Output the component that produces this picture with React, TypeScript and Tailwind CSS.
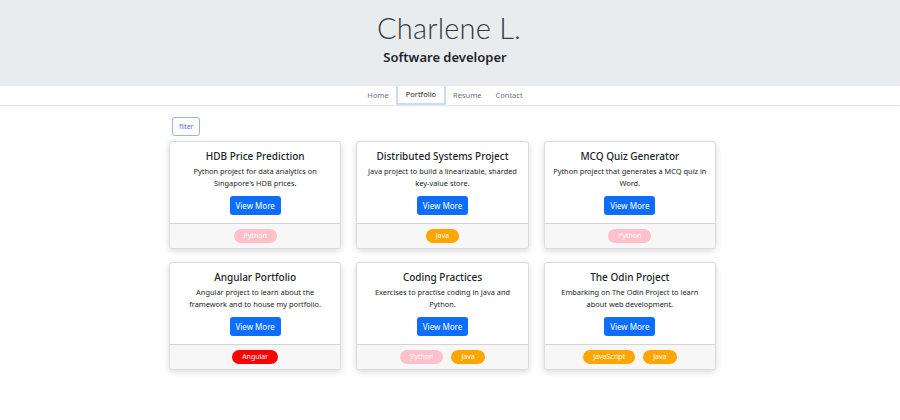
import React from 'react';

type Tag = { label: string; color: string };

interface Project {
    title: string;
    desc: string;
    tags: Tag[];
}

const PY: Tag = { label: 'Python', color: 'bg-[#ffc0cb]' };
const JAVA: Tag = { label: 'Java', color: 'bg-[#ffa500]' };

const projects: Project[] = [
    { title: 'HDB Price Prediction', desc: "Python project for data analytics on Singapore's HDB prices.", tags: [PY] },
    { title: 'Distributed Systems Project', desc: 'Java project to build a linearizable, sharded key-value store.', tags: [JAVA] },
    { title: 'MCQ Quiz Generator', desc: 'Python project that generates a MCQ quiz in Word.', tags: [PY] },
    { title: 'Angular Portfolio', desc: 'Angular project to learn about the framework and to house my portfolio.', tags: [{ label: 'Angular', color: 'bg-[#ff0000]' }] },
    { title: 'Coding Practices', desc: 'Exercises to practise coding in Java and Python.', tags: [PY, JAVA] },
    { title: 'The Odin Project', desc: 'Embarking on The Odin Project to learn about web development.', tags: [{ label: 'JavaScript', color: 'bg-[#ffa500]' }, JAVA] },
];

const ProjectCard: React.FC<{ project: Project }> = ({ project }) => (
    <div className="flex flex-col bg-white border border-[#dcdcdc] rounded-[3px] shadow-[0_2px_6px_rgba(0,0,0,0.15)]">
        <div className="flex-1 flex flex-col items-center text-center px-[7px] pt-[7px] pb-[8px]">
            <h5 className="text-[10px] leading-[14px] font-medium text-[#212529]">{project.title}</h5>
            <p className="mt-[2px] text-[7.4px] leading-[12px] text-[#212529] h-[24px]">{project.desc}</p>
            <button className="mt-[7px] w-[51px] h-[19px] rounded-[3px] bg-[#0d6efd] text-white text-[8px]">View More</button>
        </div>
        <div className="h-[25px] border-t border-[#d4d4d4] bg-[#f7f7f7] rounded-b-[3px] flex items-center justify-center gap-[8px]">
            {project.tags.map((t) => (
                <span key={t.label} className={`${t.color} text-white text-[7px] h-[14px] min-w-[33px] px-[10px] rounded-full flex items-center justify-center`}>
                    {t.label}
                </span>
            ))}
        </div>
    </div>
);

export default function App() {
    return (
        <div className="w-[900px] h-[420px] bg-white overflow-hidden font-['Noto_Sans','Open_Sans',sans-serif] text-[#212529]">
            <header className="h-[86px] bg-[#e9ecef] flex flex-col items-center pt-[10px]">
                <h1 className="font-['Lato',sans-serif] text-[29px] leading-[36px] font-light text-[#343a40] tracking-[0.2px] pr-[2px]">Charlene L.</h1>
                <h2 className="text-[13px] leading-[18px] font-semibold text-[#212529] mt-[2px] pr-[10px]">Software developer</h2>
            </header>
            <nav className="h-[20px] border-b border-[#e6e6e6] shadow-[0_1px_2px_rgba(0,0,0,0.04)] flex justify-center items-stretch text-[7.5px] text-[#6c757d] pr-[10px]">
                <span className="flex items-center px-[7px]">Home</span>
                <span className="flex items-center px-[8px] text-[#212529] border-x-2 border-b-2 border-[#c5dcfb] rounded-b-[2px]">Portfolio</span>
                <span className="flex items-center px-[7px]">Resume</span>
                <span className="flex items-center px-[7px]">Contact</span>
            </nav>
            <main className="ml-[169px] w-[547px] pt-[5px]">
                <button className="ml-[3px] h-[19px] px-[6px] border border-[#8bb6fd] rounded-[3px] text-[6.5px] text-[#6a6ae0]">filter</button>
                <div className="mt-[5px] grid grid-cols-3 gap-x-[15px] gap-y-[13px]">
                    {projects.map((p) => (
                        <ProjectCard key={p.title} project={p} />
                    ))}
                </div>
            </main>
        </div>
    );
}
